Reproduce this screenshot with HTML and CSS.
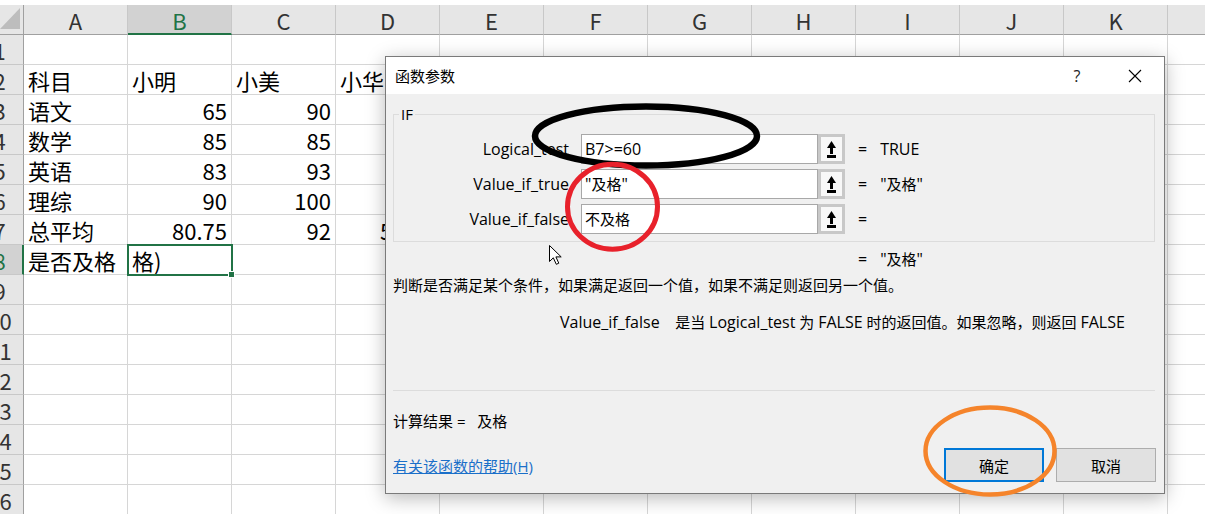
FILE: index.html
```
<!DOCTYPE html>
<html lang="zh-CN">
<head>
<meta charset="utf-8">
<title>函数参数</title>
<link rel="stylesheet" href="styles.css">
</head>
<body>
<div class="sheet">
  <div class="corner"><svg width="24" height="30" viewBox="0 0 24 30"><polygon points="0,24 20,24 20,3" fill="#bdbdbd"/></svg></div>
  <div class="ch">A</div><div class="ch sel">B</div><div class="ch">C</div><div class="ch">D</div><div class="ch">E</div><div class="ch">F</div><div class="ch">G</div><div class="ch">H</div><div class="ch">I</div><div class="ch">J</div><div class="ch">K</div><div class="ch"></div>

  <div class="rh"><span>1</span></div><div></div><div></div><div></div><div></div><div></div><div></div><div></div><div></div><div></div><div></div><div></div><div></div>
  <div class="rh"><span>2</span></div><div class="t">科目</div><div class="t">小明</div><div class="t">小美</div><div class="t">小华</div><div></div><div></div><div></div><div></div><div></div><div></div><div></div><div></div>
  <div class="rh"><span>3</span></div><div class="t">语文</div><div class="n">65</div><div class="n">90</div><div class="n">60</div><div></div><div></div><div></div><div></div><div></div><div></div><div></div><div></div>
  <div class="rh"><span>4</span></div><div class="t">数学</div><div class="n">85</div><div class="n">85</div><div class="n">50</div><div></div><div></div><div></div><div></div><div></div><div></div><div></div><div></div>
  <div class="rh"><span>5</span></div><div class="t">英语</div><div class="n">83</div><div class="n">93</div><div class="n">55</div><div></div><div></div><div></div><div></div><div></div><div></div><div></div><div></div>
  <div class="rh"><span>6</span></div><div class="t">理综</div><div class="n">90</div><div class="n">100</div><div class="n">60</div><div></div><div></div><div></div><div></div><div></div><div></div><div></div><div></div>
  <div class="rh"><span>7</span></div><div class="t">总平均</div><div class="n">80.75</div><div class="n">92</div><div class="n">56.25</div><div></div><div></div><div></div><div></div><div></div><div></div><div></div><div></div>
  <div class="rh sel"><span>8</span></div><div class="t">是否及格</div><div class="t active">格)<b class="handle"></b></div><div></div><div></div><div></div><div></div><div></div><div></div><div></div><div></div><div></div><div></div>
  <div class="rh"><span>9</span></div><div></div><div></div><div></div><div></div><div></div><div></div><div></div><div></div><div></div><div></div><div></div><div></div>
  <div class="rh"><span>10</span></div><div></div><div></div><div></div><div></div><div></div><div></div><div></div><div></div><div></div><div></div><div></div><div></div>
  <div class="rh"><span>11</span></div><div></div><div></div><div></div><div></div><div></div><div></div><div></div><div></div><div></div><div></div><div></div><div></div>
  <div class="rh"><span>12</span></div><div></div><div></div><div></div><div></div><div></div><div></div><div></div><div></div><div></div><div></div><div></div><div></div>
  <div class="rh"><span>13</span></div><div></div><div></div><div></div><div></div><div></div><div></div><div></div><div></div><div></div><div></div><div></div><div></div>
  <div class="rh"><span>14</span></div><div></div><div></div><div></div><div></div><div></div><div></div><div></div><div></div><div></div><div></div><div></div><div></div>
  <div class="rh"><span>15</span></div><div></div><div></div><div></div><div></div><div></div><div></div><div></div><div></div><div></div><div></div><div></div><div></div>
  <div class="rh"><span>16</span></div><div></div><div></div><div></div><div></div><div></div><div></div><div></div><div></div><div></div><div></div><div></div><div></div>
</div>

<div class="dialog">
  <div class="titlebar">
    <div class="title">函数参数</div>
    <div class="tbtn">?</div>
    <div class="tbtn close"><svg width="14" height="14" viewBox="0 0 14 14"><path d="M1 1 L13 13 M13 1 L1 13" stroke="#000" stroke-width="1.1" fill="none"/></svg></div>
  </div>
  <div class="dbody">
    <div class="group">
      <span class="legend">IF</span>
      <div class="param">
        <div class="plabel">Logical_test</div>
        <div class="pinput">B7&gt;=60</div>
        <div class="refbtn"><svg width="9" height="17" viewBox="0 0 9 17"><polygon points="4.5,0 9,7 0,7" fill="#000"/><rect x="3" y="7" width="3" height="6" fill="#000"/><rect x="0" y="14" width="9" height="3" fill="#000"/></svg></div>
        <div class="peq">=</div>
        <div class="pval">TRUE</div>
      </div>
      <div class="param">
        <div class="plabel">Value_if_true</div>
        <div class="pinput">"<span class="cj">及格</span>"</div>
        <div class="refbtn"><svg width="9" height="17" viewBox="0 0 9 17"><polygon points="4.5,0 9,7 0,7" fill="#000"/><rect x="3" y="7" width="3" height="6" fill="#000"/><rect x="0" y="14" width="9" height="3" fill="#000"/></svg></div>
        <div class="peq">=</div>
        <div class="pval">"<span class="cj">及格</span>"</div>
      </div>
      <div class="param">
        <div class="plabel">Value_if_false</div>
        <div class="pinput"><span class="cj">不及格</span></div>
        <div class="refbtn"><svg width="9" height="17" viewBox="0 0 9 17"><polygon points="4.5,0 9,7 0,7" fill="#000"/><rect x="3" y="7" width="3" height="6" fill="#000"/><rect x="0" y="14" width="9" height="3" fill="#000"/></svg></div>
        <div class="peq">=</div>
        <div class="pval"></div>
      </div>
    </div>
    <div class="result"><span class="peq">=</span><span class="pval">"<span class="cj">及格</span>"</span></div>
    <div class="desc">判断是否满足某个条件，如果满足返回一个值，如果不满足则返回另一个值。</div>
    <div class="pdesc"><span class="lat">Value_if_false</span>    是当 <span class="lat">Logical_test</span> 为 <span class="lat">FALSE</span> 时的返回值。如果忽略，则返回 <span class="lat">FALSE</span></div>
    <div class="sep"></div>
    <div class="calc">计算结果 =   及格</div>
    <div class="footer">
      <a class="helplink" href="#">有关该函数的帮助(H)</a>
      <div class="btns">
        <div class="btn primary">确定</div>
        <div class="btn">取消</div>
      </div>
    </div>
  </div>
</div>

<svg class="marks" width="1205" height="514" viewBox="0 0 1205 514">
  <ellipse cx="646" cy="136" rx="111" ry="29.5" fill="none" stroke="#000" stroke-width="6.5"/>
  <ellipse cx="612.5" cy="206.7" rx="45" ry="42.5" fill="none" stroke="#e8212b" stroke-width="5"/>
  <ellipse cx="990" cy="451" rx="64.5" ry="43.5" fill="none" stroke="#f5842b" stroke-width="4.5"/>
  <path d="M549.5 245.5 L549.5 261.5 L553.3 257.8 L556.3 264.3 L558.8 263.2 L555.9 256.9 L561.2 256.9 Z" fill="#fff" stroke="#000" stroke-width="1" stroke-linejoin="miter"/>
</svg>
</body>
</html>
```
FILE: styles.css
```
body {
  margin: 0;
  width: 1205px;
  height: 514px;
  overflow: hidden;
  position: relative;
  background: #fff;
}

.sheet {
  display: grid;
  grid-template-columns: 24px repeat(12, 104px);
  grid-template-rows: repeat(17, 30px);
  padding-top: 5px;
  width: max-content;
  font-family: "Noto Sans CJK SC", sans-serif;
  font-size: 22px;
  color: #000;
}

.sheet > div {
  box-sizing: border-box;
  border-right: 1px solid #d6d6d6;
  border-bottom: 1px solid #d6d6d6;
  overflow: hidden;
  white-space: nowrap;
  line-height: 31px;
}

.corner {
  background: #e6e6e6;
  border-right: 1px solid #a0a0a0 !important;
  border-bottom: 1px solid #a0a0a0 !important;
}
.corner svg { display: block; }

.ch {
  background: #e6e6e6;
  border-right-color: #c8c8c8 !important;
  border-bottom: 1px solid #a0a0a0 !important;
  text-align: center;
  color: #333;
  line-height: 30px !important;
}
.ch.sel {
  background: #d2d2d2;
  color: #217346;
  border-bottom: 2px solid #217346 !important;
}

.rh {
  background: #e6e6e6;
  border-right: 1px solid #a0a0a0 !important;
  border-bottom-color: #c8c8c8 !important;
}
.rh span {
  display: block;
  width: 47px;
  margin-left: -24px;
  text-align: center;
  color: #333;
}
.rh.sel {
  background: #d2d2d2;
  border-right: 2px solid #217346 !important;
}
.rh.sel span { color: #217346; }

.t { padding-left: 4px; }
.n { text-align: right; padding-right: 4px; }

.sheet > .active {
  outline: 2px solid #217346;
  outline-offset: -1px;
  position: relative;
  overflow: visible;
  z-index: 1;
}
.handle {
  position: absolute;
  right: -4px;
  bottom: -4px;
  width: 5px;
  height: 5px;
  background: #217346;
  border: 1px solid #fff;
}

/* Dialog */
.dialog {
  position: absolute;
  left: 385px;
  top: 56px;
  width: 780px;
  height: 438px;
  box-sizing: border-box;
  border: 1px solid #7a7a7a;
  background: #f0f0f0;
  box-shadow: 0 4px 18px rgba(0, 0, 0, 0.28);
  font-family: "Open Sans", "Noto Sans CJK SC", sans-serif;
  font-size: 16px;
  color: #000;
  display: flex;
  flex-direction: column;
}
.cj { font-size: 15px; }
.lat { font-size: 16px; }

.titlebar {
  height: 37px;
  flex: none;
  background: #fff;
  display: flex;
  align-items: center;
  padding-left: 9px;
  padding-right: 6px;
}
.title {
  flex: 1;
  font-family: "Noto Sans CJK SC", sans-serif;
  font-size: 15px;
}
.tbtn {
  width: 46px;
  height: 37px;
  display: flex;
  align-items: center;
  justify-content: center;
  font-size: 16px;
  color: #222;
}
.tbtn.close { margin-left: 12px; }
.tbtn svg { display: block; }

.dbody {
  flex: 1;
  display: flex;
  flex-direction: column;
  padding: 20px 9px 11px 7px;
}

.group {
  position: relative;
  border: 1px solid #dcdcdc;
  padding: 19px 0 7px 0;
  display: flex;
  flex-direction: column;
  gap: 5px;
}
.legend {
  position: absolute;
  top: -10px;
  left: 5px;
  padding: 0 2px;
  background: #f0f0f0;
  font-size: 15px;
  line-height: 18px;
}

.param {
  display: flex;
  align-items: center;
  height: 30px;
}
.plabel {
  width: 175px;
  text-align: right;
}
.pinput {
  margin-left: 12px;
  width: 237px;
  height: 30px;
  box-sizing: border-box;
  border: 1px solid #a8a8a8;
  background: #fff;
  padding-left: 3px;
  line-height: 28px;
  white-space: nowrap;
}
.refbtn {
  width: 27px;
  height: 30px;
  box-sizing: border-box;
  border: 3px solid #c8c8c8;
  background: #f8f8f8;
  display: flex;
  align-items: center;
  justify-content: center;
}
.refbtn svg { display: block; }
.peq { margin-left: 13px; }
.pval { margin-left: 13px; }

.result {
  margin-top: 8px;
  line-height: 18px;
  padding-left: 452px;
}
.desc {
  margin-top: 8px;
  line-height: 18px;
  font-size: 15px;
}
.pdesc {
  margin-top: 19px;
  line-height: 18px;
  padding-left: 167px;
  white-space: pre;
  font-size: 15px;
}
.sep {
  margin-top: 59px;
  height: 1px;
  background: #dcdcdc;
}
.calc {
  margin-top: 21px;
  line-height: 18px;
  white-space: pre;
  font-size: 15px;
}
.footer {
  margin-top: 18px;
  display: flex;
  align-items: center;
  justify-content: space-between;
}
.helplink {
  color: #1a6fc9;
  text-decoration: underline;
  font-size: 15px;
}
.btns {
  display: flex;
  gap: 12px;
  margin-right: -1px;
}
.btn {
  width: 100px;
  height: 34px;
  box-sizing: border-box;
  border: 1px solid #adadad;
  background: #e1e1e1;
  display: flex;
  align-items: center;
  justify-content: center;
  font-size: 15px;
}
.btn.primary {
  border: 2px solid #0078d7;
}

.marks {
  position: absolute;
  left: 0;
  top: 0;
  pointer-events: none;
}
```
